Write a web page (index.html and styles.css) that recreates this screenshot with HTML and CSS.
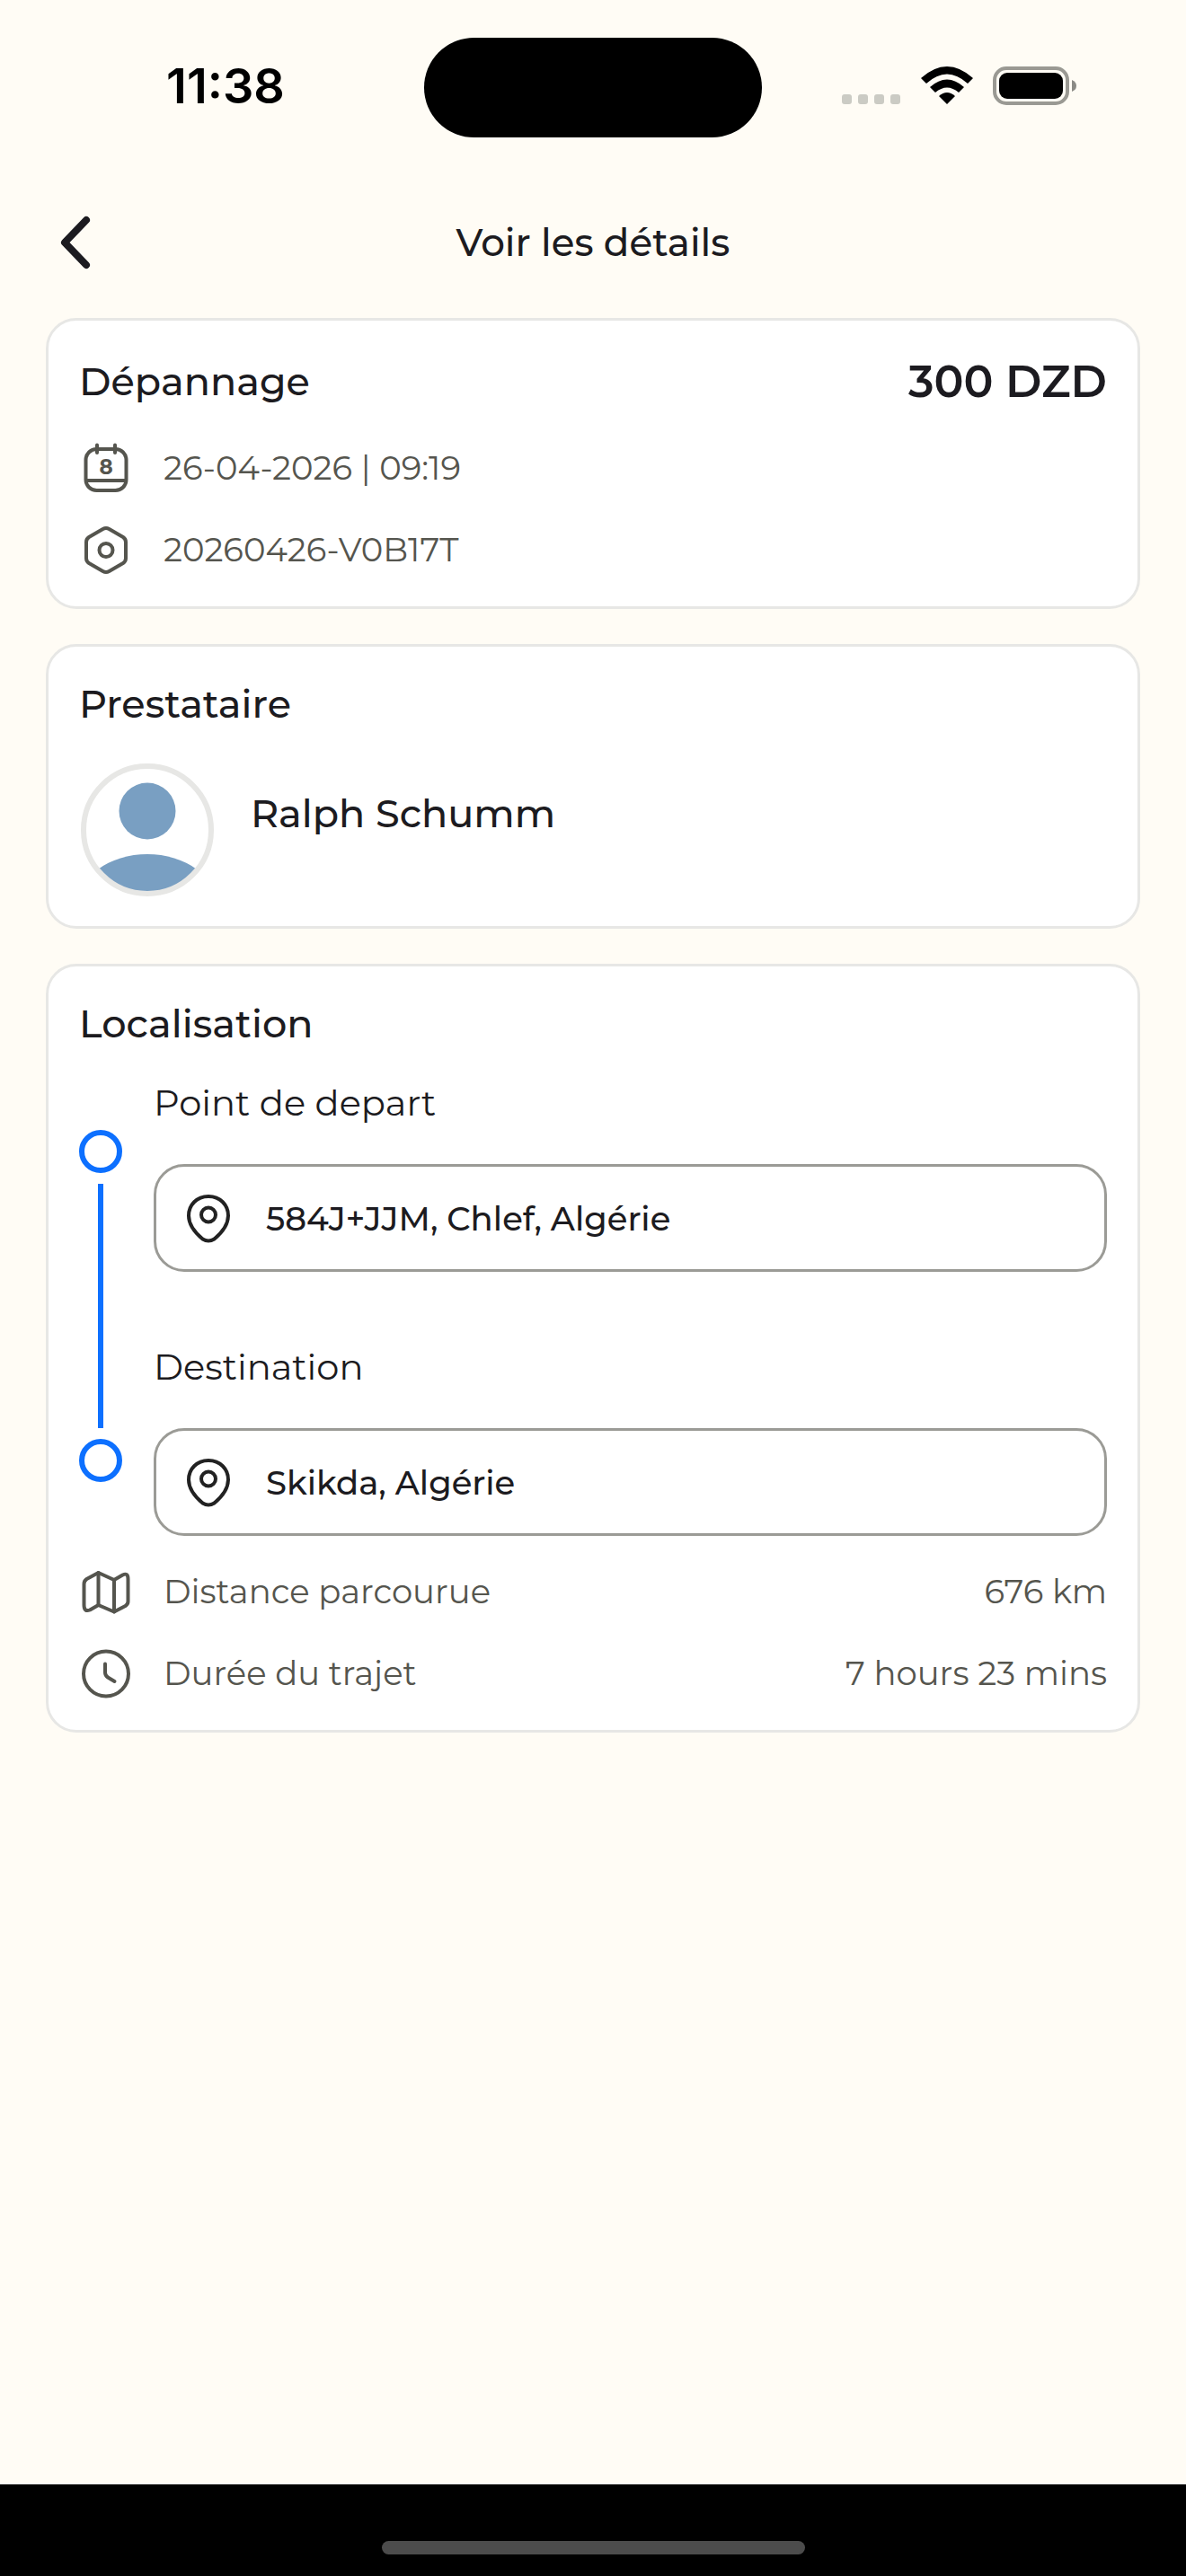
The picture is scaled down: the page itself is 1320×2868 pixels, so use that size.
FILE: index.html
```html
<!DOCTYPE html>
<html lang="fr">
<head>
    <meta charset="UTF-8">
    <meta name="viewport" content="width=device-width, initial-scale=1.0">
    <title>Voir les détails</title>
    <link rel="stylesheet" href="styles.css">
</head>
<body>

    <div class="status-bar">
        <div class="status-time">11:38</div>
        <div class="island"></div>
        <div class="status-icons">
            <svg width="66" height="43" viewBox="0 0 66 43" fill="#cbcbc4">
                <rect x="0" y="31" width="11" height="11" rx="3"/>
                <rect x="18" y="31" width="11" height="11" rx="3"/>
                <rect x="36" y="31" width="11" height="11" rx="3"/>
                <rect x="54" y="31" width="11" height="11" rx="3"/>
            </svg>
            <svg width="58" height="43" viewBox="0 0 58 43">
                <path d="M0 13 Q29 -13 58 13 L52 19 Q29 -2 6 19 Z"/>
                <path d="M10 23 Q29 6 48 23 L42 29 Q29 18 16 29 Z"/>
                <path d="M20 33 Q29 25 38 33 L29 42 Z"/>
            </svg>
            <svg width="94" height="43" viewBox="0 0 94 43">
                <rect x="2" y="2" width="81" height="39" rx="13" fill="none" stroke="#9a9993" stroke-width="4"/>
                <rect x="7" y="7" width="71" height="29" rx="9"/>
                <path d="M88 15 Q93 17 93 21.500 Q93 26 88 28 Z" fill="#8b8a85"/>
            </svg>
        </div>
    </div>

    <header class="header">
        <button class="back" type="button" aria-label="Retour">
            <svg width="60" height="60" viewBox="0 0 60 60" fill="none" stroke="#1c1b20" stroke-width="8" stroke-linecap="round" stroke-linejoin="round">
                <path d="M45 5 L21 30 L45 55"/>
            </svg>
        </button>
        <h1>Voir les détails</h1>
    </header>

    <main class="content">
        <section class="card">
            <div class="card-head">
                <h2>Dépannage</h2>
                <span class="price">300 DZD</span>
            </div>
            <div class="rows">
                <div class="row">
                    <svg class="icon" viewBox="0 0 60 60">
                        <rect x="7.500" y="9" width="45" height="46" rx="12"/>
                        <path d="M20 4.500 V13 M40 4.500 V13 M8 44 H52"/>
                        <text x="30" y="37" text-anchor="middle">8</text>
                    </svg>
                    <span>26-04-2026 | 09:19</span>
                </div>
                <div class="row">
                    <svg class="icon" viewBox="0 0 60 60">
                        <path d="M26.500 7 Q30 5 33.500 7 L49 16 Q52 18 52 21.500 V39.500 Q52 43 49 45 L33.500 54 Q30 56 26.500 54 L11 45 Q8 43 8 39.500 V21.500 Q8 18 11 16 Z"/>
                        <circle cx="30" cy="30.500" r="7.500"/>
                    </svg>
                    <span>20260426-V0B17T</span>
                </div>
            </div>
        </section>

        <section class="card">
            <h2>Prestataire</h2>
            <div class="provider">
                <svg class="avatar" width="150" height="148" viewBox="0 0 150 148">
                    <clipPath id="avatarClip"><circle cx="76" cy="74" r="69"/></clipPath>
                    <circle cx="76" cy="53" r="31.500" fill="#799fc2"/>
                    <ellipse cx="76" cy="159" rx="78" ry="58" fill="#799fc2" clip-path="url(#avatarClip)"/>
                    <circle cx="76" cy="74" r="71" fill="none" stroke="#e7e7e5" stroke-width="6"/>
                </svg>
                <span class="provider-name">Ralph Schumm</span>
            </div>
        </section>

        <section class="card">
            <h2>Localisation</h2>
            <div class="trip">
                <div class="timeline">
                    <span class="dot"></span>
                    <span class="line"></span>
                    <span class="dot"></span>
                </div>
                <div class="stops">
                    <div class="stop">
                        <label for="depart">Point de depart</label>
                        <div class="field">
                            <svg class="icon pin" viewBox="0 0 60 60">
                                <path d="M30 6 C43 6 52 15.500 52 27.500 C52 38 43 48 36.500 53.500 Q30 57.500 23.500 53.500 C17 48 8 38 8 27.500 C8 15.500 17 6 30 6 Z"/>
                                <circle cx="30" cy="26.500" r="8"/>
                            </svg>
                            <input id="depart" type="text" value="584J+JJM, Chlef, Algérie" readonly>
                        </div>
                    </div>
                    <div class="stop">
                        <label for="destination">Destination</label>
                        <div class="field">
                            <svg class="icon pin" viewBox="0 0 60 60">
                                <path d="M30 6 C43 6 52 15.500 52 27.500 C52 38 43 48 36.500 53.500 Q30 57.500 23.500 53.500 C17 48 8 38 8 27.500 C8 15.500 17 6 30 6 Z"/>
                                <circle cx="30" cy="26.500" r="8"/>
                            </svg>
                            <input id="destination" type="text" value="Skikda, Algérie" readonly>
                        </div>
                    </div>
                </div>
            </div>
            <div class="rows">
                <div class="row">
                    <svg class="icon" viewBox="0 0 60 60">
                        <path d="M21.500 9 L8.500 16 Q5.500 18 5.500 21.500 V45 Q5.500 53 12 50.500 L21.500 45 L39 52.500 L51.500 46 Q54.500 44 54.500 41 V16 Q54.500 8.500 48.500 11.500 L39 17 Z"/>
                        <path d="M21.500 9 V45 M39 17 V52.500"/>
                    </svg>
                    <span>Distance parcourue</span>
                    <span class="value">676 km</span>
                </div>
                <div class="row">
                    <svg class="icon" viewBox="0 0 60 60">
                        <circle cx="30" cy="30.500" r="25"/>
                        <path d="M29 19.500 V29 Q29 32.500 32 34.500 L39.500 39"/>
                    </svg>
                    <span>Durée du trajet</span>
                    <span class="value">7 hours 23 mins</span>
                </div>
            </div>
        </section>
    </main>

    <footer class="home-bar">
        <div class="home-handle"></div>
    </footer>

</body>
</html>
```

FILE: styles.css
```css
* {
    box-sizing: border-box;
}
body {
    margin: 0;
    min-height: 100vh;
    display: flex;
    flex-direction: column;
    background-color: #fffcf5;
    color: #1c1b20;
    font-family: Montserrat, Inter, sans-serif;
}
h1, h2 {
    margin: 0;
    font-size: 42px;
    font-weight: 500;
    line-height: 60px;
}
h2 {
    font-size: 43px;
}

/* status bar */
.status-bar {
    height: 186px;
    padding-top: 8px;
    display: grid;
    grid-template-columns: 1fr 376px 1fr;
    align-items: center;
    color: #000;
}
.status-time {
    padding-left: 30px;
    padding-bottom: 4px;
    text-align: center;
    font-family: Inter, sans-serif;
    font-size: 54px;
    font-weight: 600;
}
.island {
    height: 111px;
    border-radius: 56px;
    background-color: #000;
}
.status-icons {
    display: flex;
    justify-content: flex-end;
    gap: 22px;
    padding-right: 121px;
    padding-bottom: 4px;
}

/* header */
.header {
    height: 168px;
    padding: 0 51px;
    display: grid;
    grid-template-columns: 60px 1fr 60px;
    align-items: center;
    text-align: center;
}
.back {
    display: flex;
    padding: 0;
    border: none;
    background: none;
    cursor: pointer;
}

/* cards */
.content {
    padding: 0 51px;
    display: flex;
    flex-direction: column;
    gap: 39px;
}
.card {
    padding: 34px 34px 33px;
    background-color: #fff;
    border: 3px solid #e7e7e5;
    border-radius: 34px;
}
.card-head {
    display: flex;
    justify-content: space-between;
    align-items: center;
}
.price {
    font-size: 49px;
    font-weight: 600;
    line-height: 68px;
}
.rows {
    margin-top: 32px;
    display: flex;
    flex-direction: column;
    gap: 31px;
}
.row {
    display: flex;
    align-items: center;
    gap: 34px;
    color: #55554e;
    font-size: 37px;
    font-weight: 400;
    line-height: 60px;
}
.value {
    margin-left: auto;
}
.icon {
    flex: none;
    width: 60px;
    height: 60px;
    fill: none;
    stroke: #55554e;
    stroke-width: 4;
    stroke-linecap: round;
    stroke-linejoin: round;
}
.icon text {
    fill: #55554e;
    stroke: none;
    font-size: 23px;
    font-weight: 700;
}

/* provider */
.provider {
    margin-top: 36px;
    display: flex;
    gap: 41px;
}
.avatar {
    flex: none;
}
.provider-name {
    padding-top: 26px;
    font-size: 43px;
    font-weight: 500;
    line-height: 60px;
}

/* trip */
.trip {
    margin-top: 28px;
    display: flex;
    gap: 35px;
}
.timeline {
    padding: 60px 0;
    display: flex;
    flex-direction: column;
    align-items: center;
    gap: 12px;
}
.dot {
    width: 48px;
    height: 48px;
    border: 6px solid #0d70ff;
    border-radius: 50%;
}
.line {
    flex: 1;
    width: 6px;
    background-color: #0d70ff;
}
.stops {
    flex: 1;
    display: flex;
    flex-direction: column;
    gap: 76px;
}
.stop {
    display: flex;
    flex-direction: column;
    gap: 38px;
}
.stop label {
    font-size: 40px;
    font-weight: 400;
    line-height: 60px;
}
.field {
    height: 120px;
    padding: 0 28px;
    display: flex;
    align-items: center;
    gap: 34px;
    border: 3px solid #9b9b96;
    border-radius: 34px;
}
.field input {
    flex: 1;
    min-width: 0;
    padding: 0;
    border: none;
    outline: none;
    background: none;
    color: #1c1b20;
    font-family: inherit;
    font-size: 37px;
    font-weight: 500;
}
.pin {
    stroke: #222;
}

/* home indicator */
.home-bar {
    height: 102px;
    margin-top: auto;
    padding-bottom: 24px;
    display: flex;
    align-items: flex-end;
    justify-content: center;
    background-color: #000;
}
.home-handle {
    width: 471px;
    height: 15px;
    border-radius: 8px;
    background-color: #4c4c4c;
}
```
